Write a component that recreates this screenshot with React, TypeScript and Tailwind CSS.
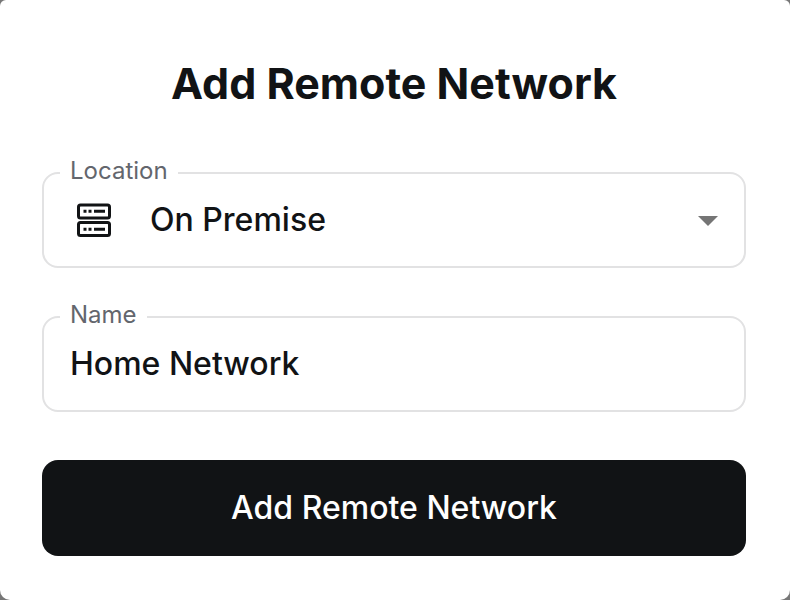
import React from "react";

function ServerIcon() {
  return (
    <svg viewBox="0 0 36 36" className="h-9 w-9" fill="none" stroke="#111315" strokeWidth="3" aria-hidden="true">
      <rect x="2.5" y="3" width="31" height="13" rx="2" />
      <rect x="2.5" y="20.5" width="31" height="13" rx="2" />
      <path d="M7.5 9.3h3M12.5 9.3h3M18 9.3h11M7.5 27.2h3M12.5 27.2h3M18 27.2h11" />
    </svg>
  );
}

export default function App() {
  return (
    <div className="min-h-screen bg-[#777777] font-['Inter',sans-serif] text-[#111315]">
      <form className="flex min-h-screen flex-col rounded-t-md rounded-b-[10px] bg-white pt-14 pr-11 pb-11 pl-[42px]">
        <h1 className="text-center text-[43px] leading-[54px] font-bold">Add Remote Network</h1>
        <div className="relative mt-[62px] h-24 rounded-2xl border-2 border-[#e2e2e3]">
          <label htmlFor="location" className="absolute -top-[17px] left-4 bg-white px-2.5 text-2xl leading-7 text-[#63666d]">Location</label>
          <div className="pointer-events-none absolute inset-y-0 left-8 flex items-center"><ServerIcon /></div>
          <select id="location" className="h-full w-full appearance-none rounded-2xl bg-transparent pl-[106px] text-[32px] font-medium outline-none">
            <option>On Premise</option>
          </select>
          <svg viewBox="0 0 20 10" className="pointer-events-none absolute top-[42px] right-[26px] h-2.5 w-5" fill="#757575" aria-hidden="true"><path d="M0 0h20L10 10z" /></svg>
        </div>
        <div className="relative mt-12 h-24 rounded-2xl border-2 border-[#e2e2e3]">
          <label htmlFor="name" className="absolute -top-[17px] left-4 bg-white px-2.5 text-2xl leading-7 text-[#63666d]">Name</label>
          <input id="name" defaultValue="Home Network" className="h-full w-full rounded-2xl bg-transparent px-[26px] pb-0.5 text-[32px] font-medium outline-none" />
        </div>
        <button type="button" className="mt-12 h-24 rounded-2xl bg-[#111315] text-[32px] font-medium text-white">Add Remote Network</button>
      </form>
    </div>
  );
}
